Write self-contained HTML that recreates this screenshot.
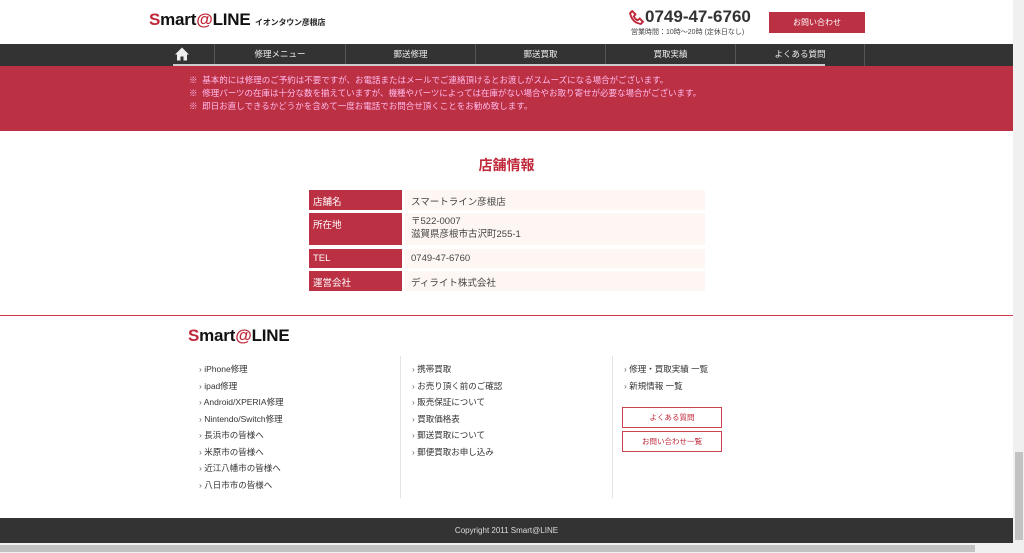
<!DOCTYPE html>
<html><head><meta charset="utf-8"><style>
*{margin:0;padding:0;box-sizing:border-box}
body{width:1024px;height:553px;overflow:hidden;background:#fff;font-family:"Liberation Sans","Noto Sans CJK JP",sans-serif;color:#333;position:relative}
.abs{position:absolute}
.logo{font-weight:bold;font-size:17px;letter-spacing:-0.2px;color:#111}
.logo .s{color:#c0283a}
.nav{left:0;top:44px;width:1013px;height:22px;background:#333}
.nav div{position:absolute;top:0;height:22px;border-left:1px solid #555;color:#eee;font-size:8.5px;line-height:20px;text-align:center}
.band{left:0;top:66px;width:1013px;height:65px;background:#bc3043;color:#fbe;font-size:8.5px}
.band p{position:absolute;left:189px;white-space:nowrap}
.row{position:absolute;left:309px;width:396px;font-size:9.5px}
.row .h{position:absolute;left:0;top:0;bottom:0;width:93px;background:#bc3043;color:#fff;padding:4px 4px}
.row .v{position:absolute;left:96px;right:0;top:0;bottom:0;background:#fdf6f3;color:#444;padding:4px 6px}
.fl{font-size:8.5px;color:#333;line-height:16.5px}
.fl div:before{content:"› ";color:#666}
.btn{border:1px solid #c9444f;color:#c0283a;font-size:7.5px;text-align:center;line-height:19px;width:100px;height:21px}
</style></head><body>
<div class="abs logo" style="left:149px;top:10px"><span class="s">S</span>mart<span class="s">@</span>LINE <span style="font-size:8px;color:#222">イオンタウン彦根店</span></div>
<svg class="abs" style="left:629px;top:10px" width="15" height="15" viewBox="0 0 14 14"><path d="M3 1 L6 4 L4.5 6 Q6 9 8 9.5 L10 8 L13 11 L11 13 Q3 12 1 3 Z" fill="none" stroke="#c0283a" stroke-width="1.8"/></svg>
<div class="abs" style="left:645px;top:7px;font-size:17px;font-weight:bold;color:#333">0749-47-6760</div>
<div class="abs" style="left:631px;top:27px;font-size:7px;color:#444">営業時間：10時〜20時 (定休日なし)</div>
<div class="abs" style="left:769px;top:12px;width:96px;height:21px;background:#bc3043;color:#fff;font-size:8px;text-align:center;line-height:21px">お問い合わせ</div>
<div class="abs nav">
<div style="left:149px;width:65px;border-left:none"><svg width="16" height="16" viewBox="0 0 16 15" style="margin-top:2px"><path d="M8 1 L1 8 H3 V14 H6.5 V10 H9.5 V14 H13 V8 H15 Z" fill="#eee"/></svg></div>
<div style="left:214px;width:131px">修理メニュー</div>
<div style="left:345px;width:130px">郵送修理</div>
<div style="left:475px;width:130px">郵送買取</div>
<div style="left:605px;width:130px">買取実績</div>
<div style="left:735px;width:130px;border-right:1px solid #555">よくある質問</div>
<div style="left:173px;top:20px;width:652px;height:2px;background:#ccc;border:none"></div>
</div>
<div class="abs band">
<p style="top:8px">※&nbsp; 基本的には修理のご予約は不要ですが、お電話またはメールでご連絡頂けるとお渡しがスムーズになる場合がございます。</p>
<p style="top:21px">※&nbsp; 修理パーツの在庫は十分な数を揃えていますが、機種やパーツによっては在庫がない場合やお取り寄せが必要な場合がございます。</p>
<p style="top:34px">※&nbsp; 即日お直しできるかどうかを含めて一度お電話でお問合せ頂くことをお勧め致します。</p>
</div>
<div class="abs" style="left:0;width:1013px;top:155px;text-align:center;font-size:14px;font-weight:bold;color:#c0283a">店舗情報</div>
<div class="row" style="top:190px;height:20px"><div class="h">店舗名</div><div class="v">スマートライン彦根店</div></div>
<div class="row" style="top:213px;height:32px"><div class="h">所在地</div><div class="v" style="line-height:12.5px;padding-top:3px">〒522-0007<br>滋賀県彦根市古沢町255-1</div></div>
<div class="row" style="top:249px;height:19px"><div class="h">TEL</div><div class="v">0749-47-6760</div></div>
<div class="row" style="top:271px;height:20px"><div class="h">運営会社</div><div class="v">ディライト株式会社</div></div>
<div class="abs" style="left:0;top:315px;width:1013px;height:1px;background:#d33a4a"></div>
<div class="abs logo" style="left:188px;top:326px"><span class="s">S</span>mart<span class="s">@</span>LINE</div>
<div class="abs" style="left:400px;top:356px;width:1px;height:142px;background:#e4e4e4"></div>
<div class="abs" style="left:612px;top:356px;width:1px;height:142px;background:#e4e4e4"></div>
<div class="abs fl" style="left:199px;top:361px"><div>iPhone修理</div><div>ipad修理</div><div>Android/XPERIA修理</div><div>Nintendo/Switch修理</div><div>長浜市の皆様へ</div><div>米原市の皆様へ</div><div>近江八幡市の皆様へ</div><div>八日市市の皆様へ</div></div>
<div class="abs fl" style="left:412px;top:361px"><div>携帯買取</div><div>お売り頂く前のご確認</div><div>販売保証について</div><div>買取価格表</div><div>郵送買取について</div><div>郵便買取お申し込み</div></div>
<div class="abs fl" style="left:624px;top:361px"><div>修理・買取実績 一覧</div><div>新規情報 一覧</div></div>
<div class="abs btn" style="left:622px;top:407px">よくある質問</div>
<div class="abs btn" style="left:622px;top:431px">お問い合わせ一覧</div>
<div class="abs" style="left:0;top:518px;width:1013px;height:25px;background:#333;color:#ddd;font-size:8px;text-align:center;line-height:25px">Copyright 2011 Smart@LINE</div>
<div class="abs" style="left:1013px;top:0;width:11px;height:553px;background:#f0f0f0"></div>
<div class="abs" style="left:1015px;top:452px;width:8px;height:88px;background:#c2c2c2"></div>
<div class="abs" style="left:0;top:543px;width:1013px;height:10px;background:#f0f0f0"></div>
<div class="abs" style="left:0;top:545px;width:975px;height:7px;background:#c2c2c2"></div>
</body></html>
